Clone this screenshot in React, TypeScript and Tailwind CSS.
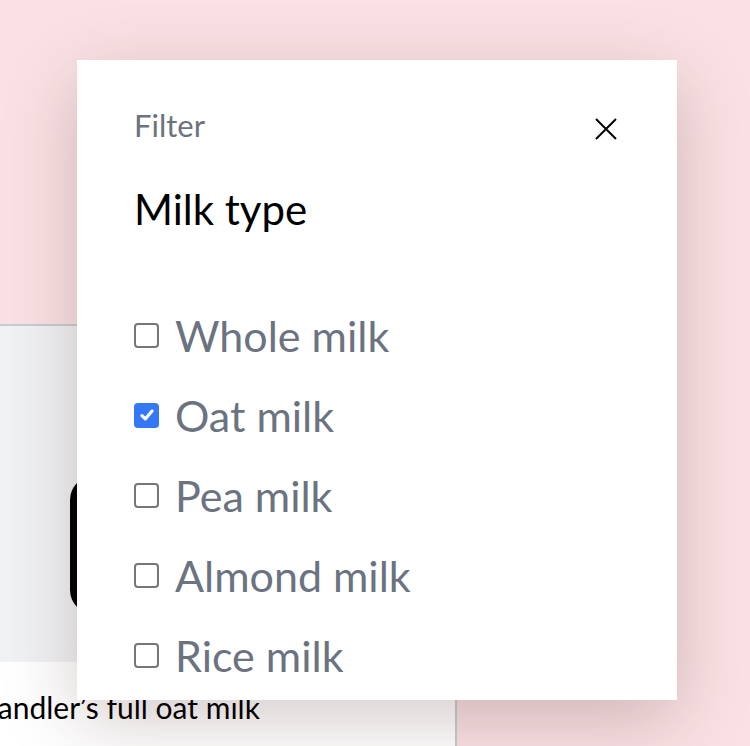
import React from 'react';

const options = [
    { id: 'whole', label: 'Whole milk', checked: false },
    { id: 'oat', label: 'Oat milk', checked: true },
    { id: 'pea', label: 'Pea milk', checked: false },
    { id: 'almond', label: 'Almond milk', checked: false },
    { id: 'rice', label: 'Rice milk', checked: false },
];

const Box: React.FC<{ checked: boolean }> = ({ checked }) =>
    checked ? (
        <span className="flex h-[25px] w-[25px] shrink-0 items-center justify-center rounded-[4px] bg-[#3478f6]">
            <svg viewBox="0 0 16 16" className="h-[18px] w-[18px]" fill="none" stroke="white" strokeWidth="2.8" strokeLinecap="round" strokeLinejoin="round">
                <path d="M3.5 8.5l3 3 6-7" />
            </svg>
        </span>
    ) : (
        <span className="h-[25px] w-[25px] shrink-0 rounded-[4px] border-2 border-[#767676] bg-white" />
    );

const App: React.FC = () => {
    return (
        <div className="relative h-[746px] w-[750px] overflow-hidden bg-[#fae2e4] font-['Lato',sans-serif]">
            {/* page behind the dialog */}
            <div className="h-[324px]" />
            <div className="-ml-[60px] flex h-[422px] w-[517px] flex-col border-t-2 border-r-2 border-[#c9ccd1] bg-white">
                <div className="flex h-[336px] items-start bg-[#f1f2f4] pt-[150px] pl-[130px]">
                    <div className="h-[138px] w-[180px] rounded-[24px] bg-black" />
                </div>
                <div className="pt-[30px] text-[30px] leading-none text-black">
                    <span className="-ml-[39px] pl-[60px]">Chandler’s full oat milk</span>
                </div>
            </div>

            {/* filter dialog */}
            <div className="absolute top-[60px] left-[77px] h-[640px] w-[600px] overflow-hidden bg-white px-[57px] pt-[40px] shadow-[0_20px_70px_rgba(60,20,20,0.22)]">
                <div className="flex items-start justify-between">
                    <div>
                        <p className="text-[31px] leading-[50px] text-[#6b7280]">Filter</p>
                        <h2 className="mt-[34px] text-[42px] leading-[50px] text-black">Milk type</h2>
                    </div>
                    <button className="mt-[17px] mr-[2px] text-black" aria-label="Close">
                        <svg viewBox="0 0 24 24" className="h-[24px] w-[24px]" fill="none" stroke="currentColor" strokeWidth="2">
                            <path d="M2 2l20 20M22 2L2 22" />
                        </svg>
                    </button>
                </div>
                <ul className="mt-[61px] flex flex-col">
                    {options.map((o) => (
                        <li key={o.id} className="flex h-[80px] items-center gap-[16px]">
                            <Box checked={o.checked} />
                            <span className="text-[43px] leading-none text-[#6b7280]">{o.label}</span>
                        </li>
                    ))}
                </ul>
            </div>
        </div>
    );
};

export default App;
